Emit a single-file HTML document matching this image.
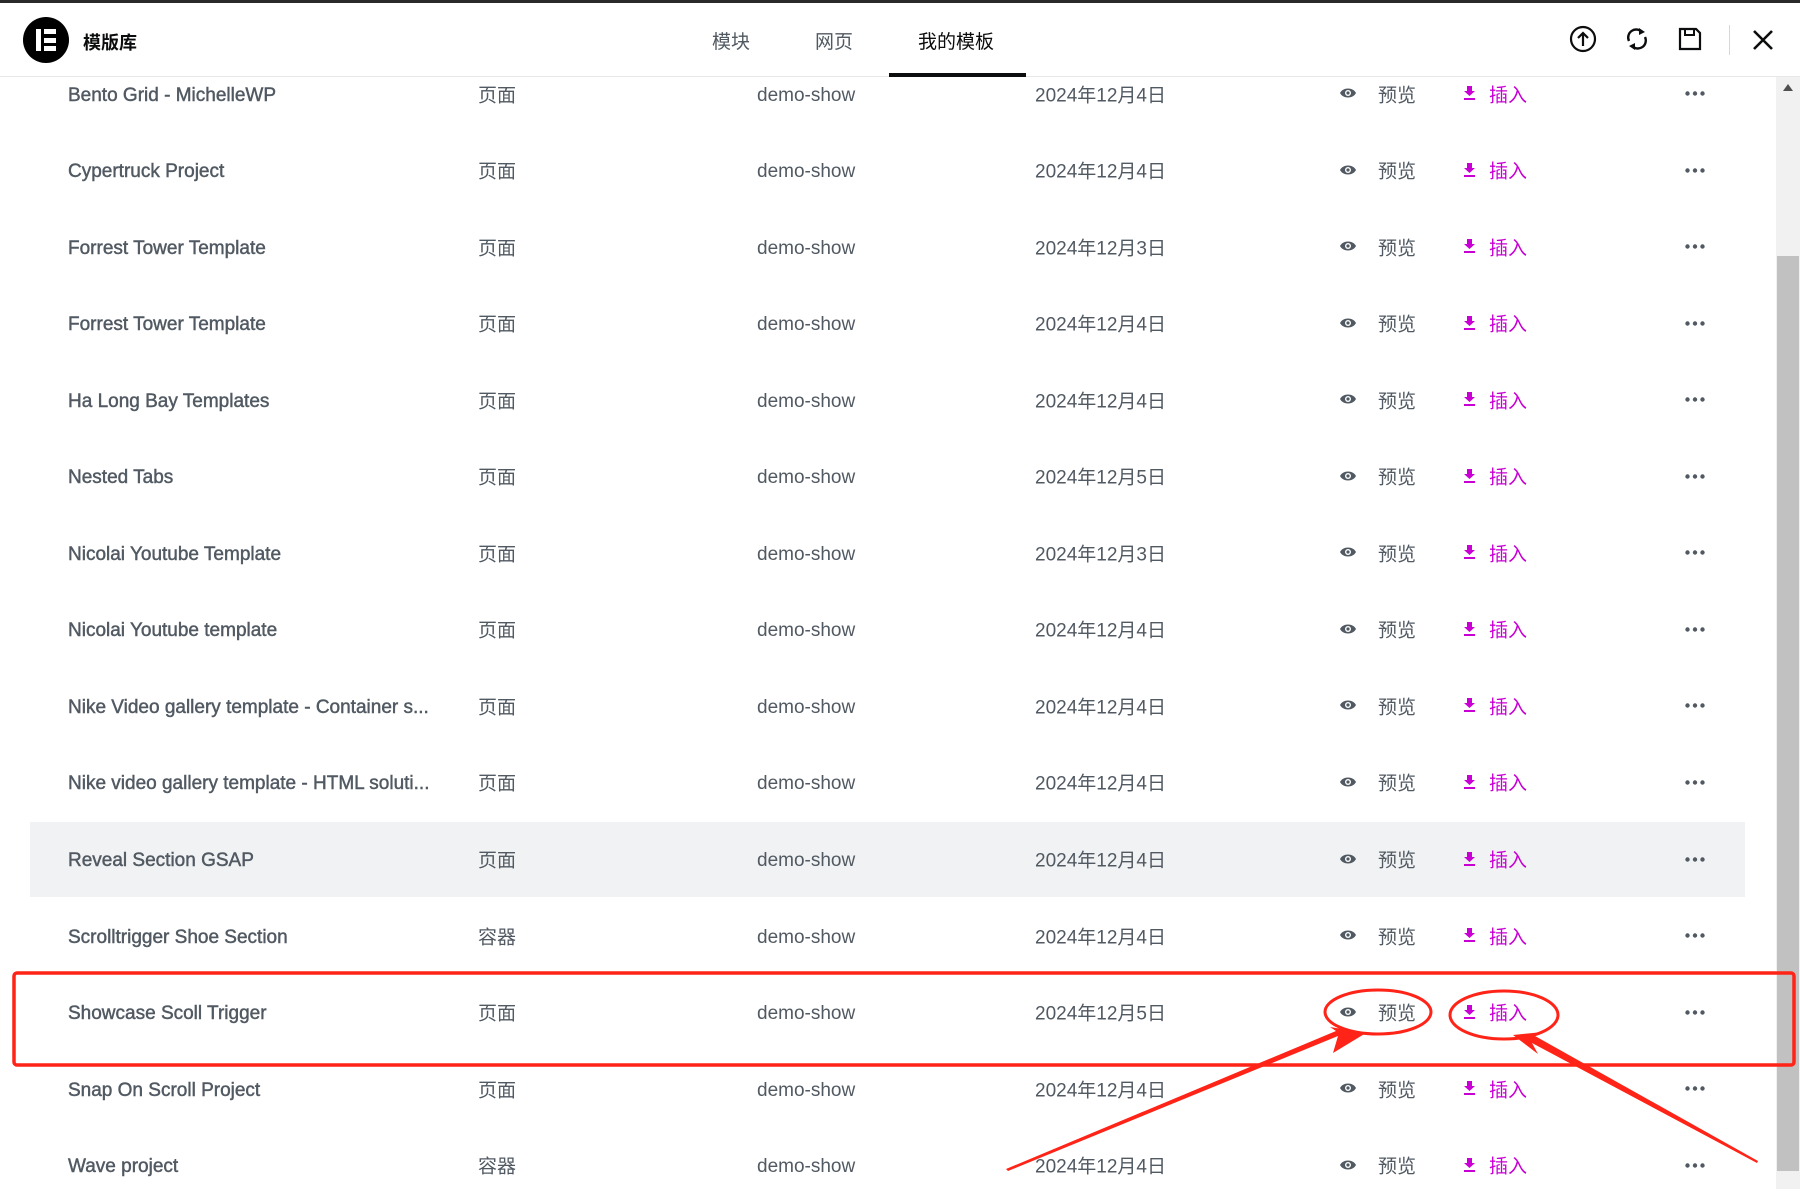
<!DOCTYPE html>
<html><head><meta charset="utf-8"><style>
*{margin:0;padding:0;box-sizing:border-box}
body{width:1800px;height:1189px;overflow:hidden;background:#fff;font-family:"Liberation Sans","Noto Sans CJK SC",sans-serif;position:relative;color:#515962}
.topline{position:absolute;left:0;top:0;width:1800px;height:3px;background:#2a2a2a}
.header{position:absolute;left:0;top:3px;width:1800px;height:74px;border-bottom:1px solid #e6e8ea;background:#fff;z-index:2}
.logo{position:absolute;left:23px;top:14px;width:46px;height:46px;border-radius:50%;background:#000}
.logo i{position:absolute;background:#fff}
.title{position:absolute;left:83px;top:26px;font-size:18px;font-weight:bold;color:#0c0d0e}
.tab{position:absolute;top:24px;font-size:19px;color:#515962}
.tab.act{color:#0c0d0e}
.under{position:absolute;left:889px;top:70px;width:137px;height:4px;background:#0c0d0e}
.ic{position:absolute;top:22px}
.row{position:absolute;left:0;width:1776px;height:77px;font-size:19px}
.row span{position:absolute;top:50%;transform:translateY(-50%);white-space:nowrap}
.row span.l{margin-top:2px}
.n{left:68px;color:#515962;font-size:19px;-webkit-text-stroke:0.45px #515962}
.t{left:478px}.a{left:757px}.d{left:1035px}
.p{left:1378px}.ins{left:1489px;color:#c800d4}
.sb{position:absolute;left:1776px;top:77px;width:24px;height:1112px;background:#f1f1f1}
.thumb{position:absolute;left:1777px;top:256px;width:22px;height:915px;background:#c1c1c1}
</style></head><body>
<div class="topline"></div>
<div class="header">
<div class="logo"><i style="left:13px;top:12px;width:5px;height:22px"></i><i style="left:21px;top:12px;width:12px;height:5px"></i><i style="left:21px;top:20.5px;width:12px;height:5px"></i><i style="left:21px;top:29px;width:12px;height:5px"></i></div>
<div class="title">模版库</div>
<div class="tab" style="left:712px">模块</div>
<div class="tab" style="left:815px">网页</div>
<div class="tab act" style="left:918px">我的模板</div>
<div class="under"></div>
<svg class="ic" style="left:1569px" width="28" height="28" viewBox="0 0 28 28"><circle cx="14" cy="14" r="12" fill="none" stroke="#0c0d0e" stroke-width="2.2"/><path d="M14 21V8M9 13l5-5 5 5" fill="none" stroke="#0c0d0e" stroke-width="2.2"/></svg>
<svg class="ic" style="left:1624px" width="26" height="28" viewBox="0 0 26 28"><path d="M5 16A8 8 0 0 1 18 7M21 12A8 8 0 0 1 8 21" fill="none" stroke="#0c0d0e" stroke-width="2.4"/><path d="M15 3l6 4-6 3zM11 25l-6-4 6-3z" fill="#0c0d0e"/></svg>
<svg class="ic" style="left:1677px" width="26" height="28" viewBox="0 0 26 28"><path d="M3 4h16l4 4v16H3z" fill="none" stroke="#0c0d0e" stroke-width="2.2"/><path d="M8 4v6h9V4" fill="none" stroke="#0c0d0e" stroke-width="2"/></svg>
<div style="position:absolute;left:1729px;top:22px;width:1px;height:30px;background:#d5d8dc"></div>
<svg class="ic" style="left:1752px;top:26px" width="22" height="22" viewBox="0 0 22 22"><path d="M2 2l18 18M20 2L2 20" stroke="#0c0d0e" stroke-width="2.6"/></svg>
</div>
<div style="position:absolute;left:30px;top:822px;width:1715px;height:75px;background:#f1f2f3"></div>
<div id="rows"></div>
<div class="sb"></div><div class="thumb"></div>
<svg style="position:absolute;left:1781px;top:83px" width="14" height="10"><path d="M7 1l5 7H2z" fill="#505050"/></svg>
<svg style="position:absolute;left:0;top:0" width="1800" height="1189">
<rect x="14" y="973" width="1780" height="92" rx="3" fill="none" stroke="#ff2417" stroke-width="3.5"/>
<ellipse cx="1378" cy="1012" rx="53" ry="22" fill="none" stroke="#ff2417" stroke-width="3"/>
<ellipse cx="1504" cy="1015" rx="54" ry="24" fill="none" stroke="#ff2417" stroke-width="3"/>
<polygon points="1008,1171 1338,1036 1333,1053 1366,1033 1330,1027 1336,1031 1006,1169" fill="#ff2417"/>
<polygon points="1757,1163 1532,1043 1538,1054 1513,1035 1543,1032 1535,1036 1758,1161" fill="#ff2417"/>
</svg>
<script>
var d=[["Bento Grid - MichelleWP","页面","2024年12月4日"],["Cypertruck Project","页面","2024年12月4日"],["Forrest Tower Template","页面","2024年12月3日"],["Forrest Tower Template","页面","2024年12月4日"],["Ha Long Bay Templates","页面","2024年12月4日"],["Nested Tabs","页面","2024年12月5日"],["Nicolai Youtube Template","页面","2024年12月3日"],["Nicolai Youtube template","页面","2024年12月4日"],["Nike Video gallery template - Container s...","页面","2024年12月4日"],["Nike video gallery template - HTML soluti...","页面","2024年12月4日"],["Reveal Section GSAP","页面","2024年12月4日"],["Scrolltrigger Shoe Section","容器","2024年12月4日"],["Showcase Scoll Trigger","页面","2024年12月5日"],["Snap On Scroll Project","页面","2024年12月4日"],["Wave project","容器","2024年12月4日"]];
var h="";
d.forEach(function(r,i){var top=55+i*76.55;
h+='<div class="row" style="top:'+top+'px"><span class="n l">'+r[0]+'</span><span class="t">'+r[1]+'</span><span class="a l">demo-show</span><span class="d">'+r[2]+'</span>'+
'<svg style="position:absolute;left:1339px;top:31px" width="18" height="14" viewBox="0 0 18 14"><path d="M1 7C4 1 14 1 17 7C14 13 4 13 1 7z" fill="#515962"/><circle cx="9" cy="7" r="3" fill="#fff"/><circle cx="9" cy="7" r="1.6" fill="#515962"/></svg>'+
'<span class="p">预览</span>'+
'<svg style="position:absolute;left:1463px;top:30px" width="13" height="16" viewBox="0 0 13 16"><path d="M4 1h5v5h3L6.5 11 1 6h3z" fill="#c800d4"/><rect x="1" y="13" width="11" height="2" fill="#c800d4"/></svg>'+
'<span class="ins">插入</span>'+
'<svg style="position:absolute;left:1685px;top:36px" width="20" height="5"><circle cx="2.5" cy="2.5" r="2.2" fill="#515962"/><circle cx="10" cy="2.5" r="2.2" fill="#515962"/><circle cx="17.5" cy="2.5" r="2.2" fill="#515962"/></svg></div>';});
document.getElementById("rows").innerHTML=h;
</script>
</body></html>
